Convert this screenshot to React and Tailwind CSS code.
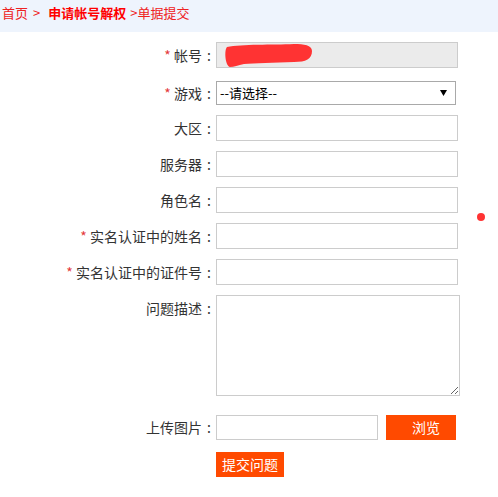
import React from 'react';

const rows = [
    { label: '大区', required: false },
    { label: '服务器', required: false },
    { label: '角色名', required: false },
    { label: '实名认证中的姓名', required: true },
    { label: '实名认证中的证件号', required: true },
];

const Label = ({ text, required, className = '' }) => (
    <div className={`w-[216px] shrink-0 text-right text-[14px] text-[#333] ${className}`}>
        {required && <span className="text-[#e4393c]">* </span>}
        {text}
        <span className="inline-block w-[14px] text-center">:</span>
    </div>
);

const App = () => {
    return (
        <div
            className="relative w-[498px] h-[497px] bg-white"
            style={{ fontFamily: '"Noto Sans CJK SC", "Noto Sans", sans-serif' }}
        >
            {/* breadcrumb */}
            <div className="h-[32px] bg-[#eef4fd] pl-[2px] text-[13px] leading-[26px] text-[#ee2222]">
                <span>首页</span>
                <span className="mx-[5px]">&gt;</span>
                <span className="ml-[3px] font-bold text-[#f00]">申请帐号解权</span>
                <span className="ml-[4px]">&gt;单据提交</span>
            </div>

            <div className="flex flex-col">
                {/* account */}
                <div className="mt-[10px] flex items-center">
                    <Label text="帐号" required />
                    <div className="relative h-[26px] w-[242px] border border-[#ccc] bg-[#ebebeb]">
                        {/* redacted value */}
                        <svg className="absolute left-[5px] top-[0px]" width="92" height="25" viewBox="0 0 92 25">
                            <path
                                d="M5 4 C20 1, 50 2, 72 1 C82 1, 90 2, 90 8 C90 16, 84 19, 72 19 C52 20, 32 20, 22 21 C16 22, 12 24, 8 24 C3 23, 2 7, 5 4 Z"
                                fill="#ff3333"
                            />
                        </svg>
                    </div>
                </div>

                {/* game */}
                <div className="mt-[13px] flex items-center">
                    <Label text="游戏" required />
                    <div className="flex h-[24px] w-[240px] items-center justify-between border border-[#a9a9a9] bg-white pl-[3px] pr-[8px] text-[13px] text-black">
                        <span>--请选择--</span>
                        <svg width="7" height="6" viewBox="0 0 7 6">
                            <path d="M0 0 H7 L3.5 6 Z" fill="#000" />
                        </svg>
                    </div>
                </div>

                {rows.map((row, index) => (
                    <div key={index} className="mt-[10px] flex items-center">
                        <Label text={row.label} required={row.required} />
                        <input type="text" className="h-[26px] w-[242px] border border-[#ccc] bg-white outline-none" />
                    </div>
                ))}

                {/* description */}
                <div className="mt-[10px] flex items-start">
                    <Label text="问题描述" className="pt-[3px]" />
                    <textarea className="h-[101px] w-[244px] border border-[#ccc] bg-white outline-none" />
                </div>

                {/* upload */}
                <div className="mt-[19px] flex items-center">
                    <Label text="上传图片" />
                    <input type="text" className="h-[25px] w-[162px] border border-[#ccc] bg-white outline-none" />
                    <button className="ml-[8px] flex h-[25px] w-[70px] items-center justify-center bg-[#ff4a00] pl-[10px] text-[14px] text-white">
                        浏览
                    </button>
                </div>

                <div className="mt-[11px] pl-[216px]">
                    <button className="h-[25px] w-[68px] bg-[#ff4a00] text-[14px] text-white">
                        提交问题
                    </button>
                </div>
            </div>

            <div className="absolute left-[477px] top-[213px] h-[8px] w-[8px] rounded-full bg-[#f33]" />
        </div>
    );
};

export default App;
